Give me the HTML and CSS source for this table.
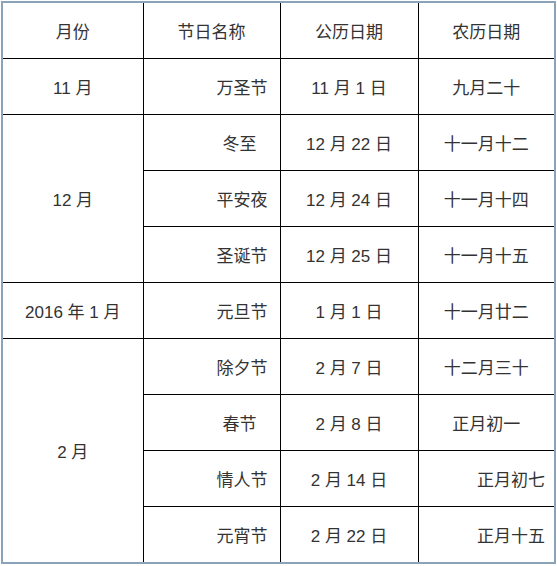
FILE: index.html
```html
<!DOCTYPE html>
<html lang="zh-CN">
<head>
<meta charset="utf-8">
<title>节日</title>
<link rel="stylesheet" href="styles.css">
</head>
<body>
<div class="frame">
<table class="holidays">
  <colgroup>
    <col class="c1"><col class="c2"><col class="c3"><col class="c4">
  </colgroup>
  <tr class="head">
    <td class="center">月份</td>
    <td class="center">节日名称</td>
    <td class="center">公历日期</td>
    <td class="center">农历日期</td>
  </tr>
  <tr>
    <td class="center">11 月</td>
    <td class="right">万圣节</td>
    <td class="center">11 月 1 日</td>
    <td class="center">九月二十</td>
  </tr>
  <tr>
    <td class="center" rowspan="3">12 月</td>
    <td class="right"><span class="gap">冬至</span></td>
    <td class="center">12 月 22 日</td>
    <td class="center">十一月十二</td>
  </tr>
  <tr>
    <td class="right">平安夜</td>
    <td class="center">12 月 24 日</td>
    <td class="center">十一月十四</td>
  </tr>
  <tr>
    <td class="right">圣诞节</td>
    <td class="center">12 月 25 日</td>
    <td class="center">十一月十五</td>
  </tr>
  <tr>
    <td class="center">2016 年 1 月</td>
    <td class="right">元旦节</td>
    <td class="center">1 月 1 日</td>
    <td class="center">十一月廿二</td>
  </tr>
  <tr>
    <td class="center" rowspan="4">2 月</td>
    <td class="right">除夕节</td>
    <td class="center">2 月 7 日</td>
    <td class="center">十二月三十</td>
  </tr>
  <tr>
    <td class="right"><span class="gap">春节</span></td>
    <td class="center">2 月 8 日</td>
    <td class="center">正月初一</td>
  </tr>
  <tr>
    <td class="right">情人节</td>
    <td class="center">2 月 14 日</td>
    <td class="right r4">正月初七</td>
  </tr>
  <tr>
    <td class="right">元宵节</td>
    <td class="center">2 月 22 日</td>
    <td class="right r4">正月十五</td>
  </tr>
</table>
</div>
</body>
</html>
```
FILE: styles.css
```css
html, body {
  margin: 0;
  padding: 0;
  background: #ffffff;
}
body {
  font-family: "Liberation Sans", "Noto Sans CJK SC", sans-serif;
  font-size: 17px;
  color: #333333;
}
.frame {
  box-sizing: border-box;
  width: 555px;
  margin: 1px 0 0 1px;
  border: 2px solid #8ba3b9;
  background: #ffffff;
}
.holidays {
  table-layout: fixed;
  border-collapse: collapse;
  border-style: hidden;
  width: 551px;
}
.c1 { width: 140px; }
.c2 { width: 137px; }
.c3 { width: 138px; }
.c4 { width: 136px; }
.holidays td {
  border: 1px solid #000000;
  height: 55px;
  padding: 0;
  vertical-align: middle;
  white-space: nowrap;
}
.center {
  text-align: center;
}
.holidays td.right {
  text-align: right;
  padding-right: 12px;
}
.holidays td.r4 {
  padding-right: 9px;
}
.gap {
  padding-right: 11px;
}
```
